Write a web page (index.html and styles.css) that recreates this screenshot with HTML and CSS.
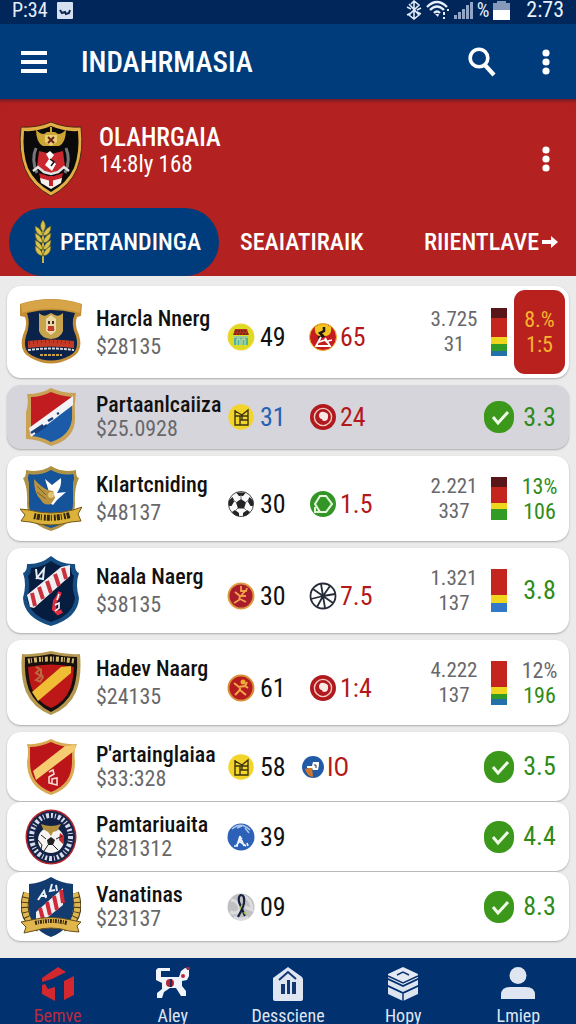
FILE: index.html
```html
<!DOCTYPE html>
<html lang="id">

<head>
    <meta charset="utf-8" />
    <meta name="viewport" content="width=device-width, initial-scale=1">
    <title>Indahrmasia</title>
    <link rel="stylesheet" href="styles.css">
</head>

<body>
    <!-- shared icons -->
    <svg class="sprite" aria-hidden="true">
        <symbol id="dots" viewBox="0 0 8 26">
            <circle cx="4" cy="4" r="3.6" /><circle cx="4" cy="13" r="3.6" /><circle cx="4" cy="22" r="3.6" />
        </symbol>
        <symbol id="check" viewBox="0 0 30 32">
            <rect width="30" height="32" rx="14.5" fill="#3b981a" />
            <path d="M9 16l5 6L24 11" fill="none" stroke="#effbe9" stroke-width="3" />
        </symbol>
        <symbol id="gate" viewBox="0 0 28 28">
            <circle cx="14" cy="14" r="12.7" fill="#f3d42b" />
            <path d="M8 7v15h13V7l-6 5-7-4M8 13h13M13 13v9M13 17h8M15 12v5" fill="none" stroke="#3d3410" stroke-width="1.4" />
        </symbol>
        <symbol id="target" viewBox="0 0 28 28">
            <circle cx="14" cy="14" r="13" fill="#b01a1e" />
            <circle cx="14" cy="14" r="8.6" fill="none" stroke="#f3c9c5" stroke-width="1.4" />
            <path d="M10 12q1-4 5-3 5 1 4 5 0 4-4 4-2 0-2-2-3 0-3-4z" fill="#fbe9e6" />
        </symbol>
    </svg>

    <div class="statusbar">
        <span>P:34</span>
        <svg width="16" height="18" viewBox="0 0 16 18"><rect y="1" width="16" height="17" rx="1" fill="#d5e0f1" /><path d="M3 9l2 3 3-1 1 2 3-1 1-3" fill="none" stroke="#0d2552" stroke-width="2" /></svg>
        <div class="statusbar-right">
            <svg width="16" height="20" viewBox="0 0 16 20" fill="none" stroke="#dfe9f8" stroke-width="1.6"><path d="M8 1v18M3 4l10 11-5 4-5-4L13 5 8 1 5 4M1 7l4 2M1 15l4-2M15 8l-4 2M15 14l-4-2" /></svg>
            <svg width="24" height="20" viewBox="0 0 24 20" fill="none" stroke="#e6effb" stroke-width="2.4"><path d="M1 7Q11-3 21 7M4 10q7-7 14 0M8 13q3-3 6 0" /><path d="M9 14h4l-1 3z" fill="#e6effb" stroke="none" /><path d="M18 12v3M18 17v2M22 9v2" stroke-width="2" /></svg>
            <svg width="19" height="18" viewBox="0 0 19 18" fill="#91a5c8"><path d="M0 14h3v4H0zM4 11h3v7H4zM8 8h3v10H8zM12 4h3v14h-3zM16 1h3v17h-3z" /></svg>
            <span>%</span>
            <svg width="17" height="19" viewBox="0 0 17 19"><path d="M4 0h9v2h4v8H0V2h4z" fill="#8799bb" /><path d="M0 9h17v10H0z" fill="#fff" /></svg>
            <span class="clock">2:73</span>
        </div>
    </div>

    <header class="appbar">
        <button class="icon-btn" aria-label="Menu">
            <svg width="26" height="22" viewBox="0 0 26 22" fill="#fff"><path d="M0 0h26v4H0zM0 9h26v4H0zM0 18h26v4H0z" /></svg>
        </button>
        <h1>INDAHRMASIA</h1>
        <button class="icon-btn" aria-label="Cari">
            <svg width="28" height="30" viewBox="0 0 28 30" fill="none" stroke="#fff" stroke-width="3.6"><circle cx="11" cy="11" r="8.8" /><path d="M16 17l10 11" stroke-width="4.2" /></svg>
        </button>
        <button class="icon-btn more" aria-label="Opsi"><svg width="8" height="26"><use href="#dots" /></svg></button>
    </header>

    <section class="hero">
        <div class="league">
            <svg width="64" height="76" viewBox="0 0 64 76">
                <path d="M32 1Q18 7 2 6q-3 24 4 42 7 17 26 27 19-10 26-27 7-18 4-42Q46 7 32 1z" fill="#e2ad45" stroke="#4c2712" />
                <path d="M32 5Q18 11 5 10q-2 22 4 37 7 15 23 24 16-9 23-24 6-15 4-37Q46 11 32 5z" fill="#0b0a0b" />
                <path d="M17 8q0 14 7 17h16q7-3 7-17-3 5-8 5l-3-2h-8l-3 2q-5 0-8-5z" fill="#cda534" />
                <path d="M26 14h12v7l-6 4-6-4z" fill="#e9cf77" /><path d="M29 16l6 6M35 16l-6 6" stroke="#6d2418" stroke-width="2" /><path d="M31 6h2v6h-2z" fill="#cda534" />
                <path d="M20 30l12 3 12-3 2 16-14 7-14-7z" fill="#c9282e" />
                <path d="M17 27q-5 12 1 25M47 27q5 12-1 25" stroke="#77767a" stroke-width="3" fill="none" />
                <path d="M31 30l4 4-3 4 5 5-4 7-7-6 4-6-3-5z" fill="#fff" /><path d="M31 38l4 3-3 4" stroke="#111" stroke-width="1.5" fill="none" />
                <path d="M14 50l5-4 6 5 7 2 7-2 6-5 5 4" fill="none" stroke="#e4e2df" stroke-width="2.5" />
                <path d="M20 52l12 4 12-4-2 9-10 6-10-6z" fill="#c8232a" /><path d="M21 57l11 3 11-3-1 5-10 6-10-6z" fill="#f4f0ec" /><path d="M30 55h4v10h-4z" fill="#c8232a" />
            </svg>
            <div class="league-info">
                <h2>OLAHRGAIA</h2>
                <p>14:8ly 168</p>
            </div>
            <button class="icon-btn" aria-label="Opsi liga"><svg width="8" height="26"><use href="#dots" /></svg></button>
        </div>
        <nav class="tabs">
            <a href="#" class="tab active">
                <svg width="20" height="44" viewBox="0 0 20 44"><path d="M10 1v42" stroke="#d0b43c" stroke-width="2" /><g fill="#d9c24c" stroke="#5b5a25" stroke-width=".7"><path d="M10 0q5 6 0 12-5-6 0-12z" /><path id="leaf" d="M10 16Q2 15 2 6q7 3 8 10zM10 16q8-1 8-10-7 3-8 10z" /><use href="#leaf" y="7" /><use href="#leaf" y="14" /><use href="#leaf" y="20" /></g></svg>
                PERTANDINGA
            </a>
            <a href="#" class="tab">SEAIATIRAIK</a>
            <a href="#" class="tab last">RIIENTLAVE<svg width="16" height="14" viewBox="0 0 16 14"><path d="M0 5h9V1l7 6-7 6V9H0z" fill="#fff" /></svg></a>
        </nav>
    </section>

    <main>
        <ul class="list">
            <li class="card first">
                <svg class="crest" width="64" height="66" viewBox="0 0 64 66">
                    <path d="M1 5Q32-5 63 5l-1 12-4 1q-3 8 2 18 5 17-8 23-20 11-40 0Q-1 53 4 36q5-10 2-18l-5-1z" fill="#c28d35" />
                    <path d="M8 14q24-6 48 0-5 11 1 23 4 15-7 20-18 9-36 0Q3 52 7 37q5-12 1-23z" fill="#0b2349" />
                    <path d="M2 5q30-9 60 0l-1 9Q32 5 3 14z" fill="#d7a548" />
                    <path d="M20 14q4 4 8 2l4-2 4 2q4 2 8-2v18q-2 7-12 8-10-1-12-8z" fill="#c8a44c" />
                    <path d="M27 20l5-4 5 4v12l-5 4-5-4z" fill="#e9d9a7" /><path d="M29 22h2v3h-2zM33 22h2v3h-2zM28 31l4-3 4 3" fill="#422d22" /><path d="M29 27h6v5h-6z" fill="#c53b2e" />
                    <path d="M9 42q23-3 46 0v7q-23-3-46 0z" fill="#c33a25" /><path d="M10 44q22-3 44 0" stroke="#8c2a20" stroke-width="3" stroke-dasharray="1 3" fill="none" />
                    <path d="M9 51q23-3 46 0" stroke="#d6d9dd" stroke-width="2" stroke-dasharray="3 1" fill="none" /><path d="M21 56h22" stroke="#c9a03d" stroke-width="2" stroke-dasharray="3 1" />
                </svg>
                <div class="team"><h3>Harcla Nnerg</h3><p>$28135</p></div>
                <div class="stat">
                    <svg viewBox="0 0 28 28"><circle cx="14" cy="14" r="12.7" fill="#d9dc22" stroke="#efd534" stroke-width="1.5" /><path d="M8 6h12l2 6H6z" fill="#b9311c" /><path d="M8 8h12M7 11h14" stroke="#3b2b17" stroke-dasharray="2 1" /><path d="M7 13h14v9H7z" fill="#4fb1a0" /><path d="M10 22v-6h3v6M15 22v-6h3v6M7 14h14" stroke="#e5e89b" fill="none" /></svg>
                    <span>49</span>
                </div>
                <div class="stat red">
                    <svg viewBox="0 0 28 28"><circle cx="14" cy="14" r="13.5" fill="#c51c20" stroke="#eeb62b" /><path d="M6 4q8-6 16 0 1 8-5 9h-6q-6-1-5-9z" fill="#f1c51f" /><path d="M15 4v4l-4 2 3 3-5 2" stroke="#25130d" stroke-width="2.5" fill="none" /><path d="M12 14l-5 9h14l-5-8M10 19l6-2 3 3M19 18l4-1" stroke="#fff" stroke-width="1.8" fill="none" /></svg>
                    <span>65</span>
                </div>
                <div class="odds">3.725<br>31</div>
                <div class="meter"><i class="dark s10"></i><i class="crimson s19"></i><i class="yellow s7"></i><i class="green s7"></i><i class="blue s5"></i></div>
                <div class="score hot"><b>8.%</b><b>1:5</b></div>
            </li>

            <li class="card compact selected">
                <svg class="crest" width="54" height="60" viewBox="0 0 54 60">
                    <path d="M27 1Q17 7 3 7q2 9-1 18v27q12 0 25 7 25-7 24-29-1-12 1-24Q37 6 27 1z" fill="#c9a256" />
                    <path d="M27 5Q17 10 7 10v34L48 12v-2Q36 9 27 5z" fill="#c11d20" /><path d="M48 15v17q-2 17-21 23-9-5-19-6z" fill="#1c5ba8" />
                    <path d="M5 41L49 9v9L7 50z" fill="#f3f2f6" /><path d="M7 46l12-8M11 46l12-8M24 34l5-3M33 27l2-1" stroke="#173f7c" stroke-width="2.5" fill="none" />
                </svg>
                <div class="team"><h3>Partaanlcaiiza</h3><p>$25.0928</p></div>
                <div class="stat blue-text"><svg><use href="#gate" /></svg><span>31</span></div>
                <div class="stat red"><svg><use href="#target" /></svg><span>24</span></div>
                <svg class="check" width="30" height="32"><use href="#check" /></svg>
                <div class="score"><b>3.3</b></div>
            </li>

            <li class="card">
                <svg class="crest" width="62" height="66" viewBox="0 0 62 66">
                    <path d="M31 0Q20 7 6 4q0 8-3 8 5 10 4 25 0 21 24 28 24-7 24-28-1-15 4-25-3 0-3-8-14 3-25-4z" fill="#ad9246" />
                    <path d="M31 4Q20 10 9 8 7 11 9 17v20q0 19 22 25 22-6 22-25V17q2-6 0-9-11 2-22-4z" fill="#15539a" />
                    <path d="M25 13l7 6 9-7q1 8-4 15l9-1-9 8-4 5-7-4 3-9z" fill="#fff" /><path d="M14 13q8 9 14 11l5 1 2 7-4 6q-7 2-10-4-7-6-7-21z" fill="#b89442" /><path d="M17 20l9 9M17 26l9 7" stroke="#7b6128" /><circle cx="31" cy="29" r="3" fill="#e3c574" />
                    <path d="M0 43l9 1q22 6 44 0l9-3-4 7 3 7-10 1q-20 6-41 0l-9-1 4-6z" fill="#dbb33b" stroke="#775818" /><path d="M14 50q17 4 36-1" stroke="#352a10" stroke-width="6" stroke-dasharray="2 1 3 1 1 2" fill="none" />
                </svg>
                <div class="team"><h3>Kılartcniding</h3><p>$48137</p></div>
                <div class="stat">
                    <svg viewBox="0 0 28 28"><circle cx="14" cy="14" r="12.5" fill="#fafafa" stroke="#494a4e" /><path d="M14 9l5 3.500-2 6h-6l-2-6zM9 2.500h10L16 6h-4zM1.500 11l4-4 2 4-3 5H2zM26.500 11l-4-4-2 4 3 5h2.500zM5 22l3-2 4 3v3.500q-5-1-7-4.500zM23 22l-3-2-4 3v3.500q5-1 7-4.500z" fill="#242427" /><path d="M14 9V5M19 12l3-2M17 18l3 3M11 18l-3 3M9 12l-3-2" stroke="#777" /></svg>
                    <span>30</span>
                </div>
                <div class="stat red">
                    <svg viewBox="0 0 28 28"><circle cx="14" cy="14" r="13" fill="#339525" /><path d="M11 6h6l6 8-6 8h-6l-5-8z" fill="none" stroke="#e8f8df" stroke-width="2" /><path d="M6 17v5h5" fill="none" stroke="#dff4d4" stroke-width="2" /></svg>
                    <span>1.5</span>
                </div>
                <div class="odds">2.221<br>337</div>
                <div class="meter"><i class="dark s10"></i><i class="crimson s16"></i><i class="yellow s6"></i><i class="green s11"></i></div>
                <div class="score"><b>13%</b><b>106</b></div>
            </li>

            <li class="card">
                <svg class="crest" width="58" height="70" viewBox="0 0 58 70">
                    <path d="M29 0Q18 9 5 8q0 8-4 9 4 11 0 25 1 20 28 28 27-8 28-28-4-14 0-25-4-1-4-9Q40 9 29 0z" fill="#164e83" />
                    <path d="M29 5Q19 12 9 12q0 6-3 8 3 10-1 22 2 17 24 24 22-7 24-24-4-12-1-22-3-2-3-8-10 0-20-7z" fill="#061d40" />
                    <path d="M5 39L39 11l9-2v11L12 52l-4-1z" fill="#f2eff1" /><path d="M10 37l3 13M17 31l4 12M25 25l4 12M33 18l4 12M41 12l3 11" stroke="#c7323c" stroke-width="4" />
                    <path d="M14 13l1 9 6 1 1-10-8 10" stroke="#e5edf6" stroke-width="2" fill="none" /><path d="M38 36l-2 5-3 4-1 8 4 4 4-2" stroke="#e22e40" stroke-width="4" fill="none" /><path d="M33 49l4-2v5l-4 3M37 38l-2 6" stroke="#fff" stroke-width="1.5" fill="none" />
                </svg>
                <div class="team"><h3>Naala Naerg</h3><p>$38135</p></div>
                <div class="stat">
                    <svg viewBox="0 0 28 28"><circle cx="14" cy="14" r="12.5" fill="#a91c2b" stroke="#dc9b3e" stroke-width="2" /><path d="M14 4v5h5l1-3M8 10l5 4h6M13 14l-1 4-5 3M13 17l6 3M18 9l-4 5" stroke="#f0a24b" stroke-width="1.8" fill="none" /></svg>
                    <span>30</span>
                </div>
                <div class="stat red">
                    <svg viewBox="0 0 28 28"><circle cx="14" cy="14" r="12.5" fill="#fff" stroke="#252b37" stroke-width="1.8" /><path d="M14 14l-2-12M14 14l7-10M14 14l12-2M14 14l10 7M14 14l2 12M14 14L8 25M14 14L2 17M14 14L4 7" stroke="#252b37" stroke-width="1.8" /></svg>
                    <span>7.5</span>
                </div>
                <div class="odds">1.321<br>137</div>
                <div class="meter"><i class="crimson s26"></i><i class="yellow s8"></i><i class="azure s9"></i></div>
                <div class="score"><b>3.8</b></div>
            </li>

            <li class="card">
                <svg class="crest" width="60" height="66" viewBox="0 0 60 66">
                    <path d="M30 1Q15 5 1 4q-2 23 4 38 7 16 25 23 18-7 25-23 6-15 4-38Q45 5 30 1z" fill="#b59850" />
                    <path d="M30 4Q16 7 4 7 3 27 8 40q7 15 22 22 15-7 22-22 5-13 4-33Q44 7 30 4z" fill="#17100d" />
                    <path d="M7 17q23-5 46 0-1 15-4 22-5 13-19 19-14-6-19-19-3-7-4-22z" fill="#bd1718" /><path d="M40 17l10-1v7L17 51l-6-9z" fill="#f0bd35" />
                    <path d="M7 11q23-4 46 0" stroke="#d1b769" stroke-width="5" stroke-dasharray="2 1 1 2 3 2" fill="none" /><path d="M15 17l4 2-4 4 5 3-5 4 5 2M20 19v5l2 3-3 5" stroke="#bd693d" stroke-width="2" fill="none" />
                </svg>
                <div class="team"><h3>Hadev Naarg</h3><p>$24135</p></div>
                <div class="stat">
                    <svg viewBox="0 0 28 28"><circle cx="14" cy="14" r="12.5" fill="#b51c20" stroke="#d98e35" stroke-width="2" /><circle cx="16" cy="8" r="2.5" fill="#f0ad34" /><path d="M7 9l5 4 6-1 2-4M14 12l-2 5-4 4M13 16l6 5M18 12l3 2" stroke="#f1a846" stroke-width="2" fill="none" /></svg>
                    <span>61</span>
                </div>
                <div class="stat red"><svg><use href="#target" /></svg><span>1:4</span></div>
                <div class="odds">4.222<br>137</div>
                <div class="meter"><i class="crimson s26"></i><i class="yellow s7"></i><i class="green s5"></i><i class="blue s6"></i></div>
                <div class="score"><b class="muted">12%</b><b>196</b></div>
            </li>

            <li class="card compact">
                <svg class="crest" width="52" height="58" viewBox="0 0 52 58">
                    <path d="M26 1Q14 7 2 6q2 8 0 18 0 25 24 33 24-8 24-33-1-8 0-13l2-5Q37 7 26 1z" fill="#d9aa52" />
                    <path d="M26 4Q15 9 5 9v15q0 22 21 30 21-8 21-30V9Q36 9 26 4z" fill="#bc1519" /><path d="M40 8l11-1-2 6-38 29-3-9z" fill="#f5cd70" />
                    <path d="M24 34l4-2 1 4-5 3v6l8 2v-7l-5 1v4" stroke="#f3d9d6" stroke-width="1.6" fill="none" />
                </svg>
                <div class="team"><h3>P'artainglaiaa</h3><p>$33:328</p></div>
                <div class="stat"><svg><use href="#gate" /></svg><span>58</span></div>
                <div class="stat red small">
                    <svg viewBox="0 0 22 22"><circle cx="11" cy="11" r="11" fill="#215aa6" /><path d="M3 13l7-2 1 10q-6-1-8-8z" fill="#d0762b" /><path d="M5 10h5l1-4h6v3l-1 5h-5l-1-2H5z" fill="#fff" /><path d="M12 9h2v3" stroke="#333" fill="none" /></svg>
                    <span>IO</span>
                </div>
                <svg class="check" width="30" height="32"><use href="#check" /></svg>
                <div class="score"><b>3.5</b></div>
            </li>

            <li class="card compact">
                <svg class="crest" width="52" height="56" viewBox="0 0 52 56">
                    <ellipse cx="26" cy="28" rx="25.5" ry="27.5" fill="#b4242d" /><ellipse cx="26" cy="28" rx="24" ry="26" fill="#172449" />
                    <ellipse cx="26" cy="28" rx="19.5" ry="21.5" fill="none" stroke="#d6ddeb" stroke-width="5" stroke-dasharray="2 2 1 2 3 2" />
                    <ellipse cx="26" cy="28" rx="15.5" ry="18" fill="#122246" /><circle cx="26" cy="31" r="13" fill="#f7f5f4" /><path d="M35 24l4 3v9l-5-5z" fill="#c7282c" />
                    <path d="M26 28l4 3-2 5h-5l-1-5z" fill="#222" /><path d="M13 31l4 5-1 4M23 36l-4 6M28 36l5 5M31 30l6-3M21 30l-5-4" fill="none" stroke="#222" /><path d="M16 15q10 4 20 0l-4 7-4 1-2 4-3-4-5-3z" fill="#b3903d" />
                </svg>
                <div class="team"><h3>Pamtariuaita</h3><p>$281312</p></div>
                <div class="stat">
                    <svg viewBox="0 0 28 28"><circle cx="14" cy="14" r="13.5" fill="#2c61b7" /><path d="M5 6q9-8 18 1M10 5l5-2M18 5l4 5" stroke="#a9c5ea" stroke-width="1.5" fill="none" /><path d="M13 13l-3 10M13 13l4 10M12 18l7 5M7 23h4M15 15l-6 8M20 20l1 3" stroke="#edf4fd" stroke-width="1.7" fill="none" /></svg>
                    <span>39</span>
                </div>
                <svg class="check" width="30" height="32"><use href="#check" /></svg>
                <div class="score"><b>4.4</b></div>
            </li>

            <li class="card compact">
                <svg class="crest" width="60" height="62" viewBox="0 0 60 62">
                    <path d="M6 17Q-2 42 18 52M54 17q8 25-12 35" fill="none" stroke="#4d3c18" stroke-width="8" /><path d="M6 17Q-2 42 18 52M54 17q8 25-12 35" fill="none" stroke="#dfb54f" stroke-width="6" stroke-dasharray="4 1" />
                    <path d="M30 1Q20 7 8 8v25q1 20 22 28 21-8 22-28V8Q40 7 30 1z" fill="#123b70" />
                    <path d="M15 36L42 12v17L22 45l-7-2z" fill="#f2eef0" /><path d="M19 32l3 11M26 26l3 13M33 20l3 14M40 14l2 13" stroke="#cf2836" stroke-width="4" />
                    <path d="M17 24l6-9 2 7M19 20h7M31 8l-2 7 5-1M35 9l1 6" stroke="#e8eff7" stroke-width="2" fill="none" />
                    <path d="M0 46l10-2q20-5 40 0l10 2-4 4 2 6-10-1q-18-6-36 0l-9 2 2-6z" fill="#e0b64d" stroke="#68501d" /><path d="M14 47q16-4 32 0" stroke="#382a11" stroke-width="4" stroke-dasharray="2 1 1 1" fill="none" />
                </svg>
                <div class="team"><h3>Vanatinas</h3><p>$23137</p></div>
                <div class="stat">
                    <svg viewBox="0 0 28 28"><circle cx="14" cy="14" r="13.5" fill="#c0c0c3" /><path d="M4 7q8 1 9 9-3 6-10 3M17 3q8 4 8 14l-7-3M7 24q7 4 14 0" stroke="#dcdcdf" stroke-width="3" fill="none" /><path d="M18 23L12 9q-1-6 2-7 4 0 3 8-1 5-6 14" stroke="#15203e" stroke-width="2.2" fill="none" /><path d="M15 12l-2 4M17 19l2 3" stroke="#9fc13a" stroke-width="1.5" /></svg>
                    <span>09</span>
                </div>
                <svg class="check" width="30" height="32"><use href="#check" /></svg>
                <div class="score"><b>8.3</b></div>
            </li>
        </ul>
    </main>

    <nav class="bottom-nav">
        <a href="#" class="active">
            <svg width="34" height="34" viewBox="0 0 34 34" fill="#d3282f"><path d="M1 11L17 0l8 5-14 7-10 3zM1 18l3-1 3 5 7-2v14L1 27zM23 14l10-5v19l-10 5z" /></svg>
            <span>Бemve</span>
        </a>
        <a href="#">
            <svg width="36" height="32" viewBox="0 0 36 32"><path d="M3 1h12v3H6v6h18l2-6 4-3 4 1v7l-2 4-5 1v5l4 5v5h-5l-5-8h-6l-6 4-2 6H2v-5l5-4v-6l-6-3V3z" fill="#f1f4fa" /><circle cx="15" cy="16" r="4" fill="#b72435" /><path d="M16 12v8" stroke="#182c5f" stroke-width="2" /><circle cx="28" cy="9" r="2" fill="#c32435" /><path d="M31 0h4v3h-3z" fill="#9e2741" /></svg>
            <span>Aley</span>
        </a>
        <a href="#">
            <svg width="30" height="34" viewBox="0 0 30 34"><path d="M15 0l14 10 1 2v20q0 2-2 2H2q-2 0-2-2V11z" fill="#dfe6f2" /><path d="M6 13l9-8 8 7" stroke="#123771" stroke-width="2" fill="none" /><path d="M8 17h4v10H8zM14 13h3v14h-3zM19 15h4v12h-4z" fill="#123771" /></svg>
            <span>Dessciene</span>
        </a>
        <a href="#">
            <svg width="32" height="34" viewBox="0 0 32 34"><path d="M16 0l15 7v4l-15 7L1 11V7z" fill="#e4eaf4" /><path d="M10 8l6-3 6 3" fill="none" stroke="#0d3270" stroke-width="1.5" /><path d="M1 13l15 7 15-7v5l-15 7-15-7zM1 20l15 7 15-7v7l-15 7-15-7z" fill="#dde4f0" /><path d="M1 9l15 7 15-7M16 27v7" stroke="#0d3270" stroke-width="1.500" fill="none" /></svg>
            <span>Hopy</span>
        </a>
        <a href="#">
            <svg width="34" height="32" viewBox="0 0 34 32" fill="#dfe6f2"><circle cx="17" cy="8.5" r="8.5" /><path d="M0 32v-4q0-8 9-8h16q9 0 9 8v4z" /></svg>
            <span>Lmiep</span>
        </a>
    </nav>
</body>

</html>
```
FILE: styles.css
```css
* {
    box-sizing: border-box;
    margin: 0;
    padding: 0;
}

body {
    min-height: 100vh;
    display: flex;
    flex-direction: column;
    background-color: #ebebec;
    font-family: "Roboto Condensed", "Liberation Sans Narrow", Roboto, sans-serif;
    color: #111;
}

a {
    color: inherit;
    text-decoration: none;
}

svg {
    display: block;
    flex-shrink: 0;
}

.sprite {
    position: absolute;
    width: 0;
    height: 0;
}

/* top bars */
.statusbar {
    display: flex;
    align-items: center;
    gap: 9px;
    height: 24px;
    padding: 0 12px 4px;
    background-color: #00265a;
    color: #e6effb;
    font-size: 20px;
    line-height: 20px;
}

.statusbar-right {
    display: flex;
    align-items: center;
    gap: 4px;
    margin-left: auto;
}

.clock {
    padding-left: 12px;
    font-size: 22px;
}

.appbar {
    display: flex;
    align-items: center;
    height: 75px;
    padding: 0 26px 0 21px;
    background-color: #003b7b;
    color: #fff;
}

.appbar h1 {
    flex: 1;
    padding-left: 34px;
    font-size: 29px;
    font-weight: 500;
}

.icon-btn {
    border: 0;
    background: none;
    fill: #fff;
    cursor: pointer;
}

.appbar .more {
    margin-left: 46px;
}

.hero {
    background-color: #b32220;
    box-shadow: inset 0 5px 4px -4px #50182c;
    color: #fff;
}

.league {
    display: flex;
    align-items: center;
    height: 109px;
    padding: 10px 26px 0 19px;
}

.league-info {
    flex: 1;
    padding: 0 0 16px 16px;
}

.league h2 {
    font-size: 25px;
    line-height: 28px;
    font-weight: 500;
}

.league p {
    font-size: 23px;
    line-height: 26px;
}

.tabs {
    display: flex;
    align-items: center;
    padding: 0 18px 0 9px;
    font-size: 24px;
    font-weight: 500;
}

.tab {
    display: flex;
    align-items: center;
    gap: 3px;
}

.tab.active {
    height: 68px;
    gap: 7px;
    margin-right: 21px;
    padding: 0 18px 0 24px;
    border-radius: 34px;
    background-color: #003b7b;
}

.tab.last {
    margin-left: auto;
}

/* match list */
main {
    flex: 1;
    padding: 10px 7px;
}

.list {
    display: flex;
    flex-direction: column;
    gap: 7px;
    list-style: none;
}

.card {
    display: grid;
    grid-template-columns: 64px 132px 82px 1fr 60px 30px 51px;
    grid-template-rows: 1fr;
    align-items: center;
    min-height: 85px;
    padding: 0 4px 0 12px;
    border-radius: 14px;
    background-color: #fff;
    box-shadow: 0 1px 2px #aaa;
}

.card.first {
    min-height: 92px;
}

.card.compact {
    min-height: 69px;
}

.card.compact + .card.compact {
    margin-top: -6px;
}

.card.selected {
    min-height: 64px;
    background-color: #d6d5dc;
}

.crest {
    justify-self: center;
}

.team {
    padding-left: 13px;
    white-space: nowrap;
}

.team h3 {
    font-size: 22px;
    line-height: 28px;
    font-weight: 500;
}

.team p {
    font-size: 22px;
    line-height: 27px;
    color: #68686b;
}

.compact .team h3,
.compact .team p {
    line-height: 24px;
}

.stat {
    grid-column: 3;
    display: flex;
    align-items: center;
    gap: 5px;
    padding: 10px 0 0 12px;
    font-size: 26px;
    line-height: 28px;
    white-space: nowrap;
}

.compact .stat {
    padding-top: 0;
}

.stat svg {
    width: 28px;
    height: 28px;
}

.stat.red {
    grid-column: 4;
    gap: 3px;
    color: #b3191b;
}

.stat.small {
    padding-left: 5px;
}

.stat.small svg {
    width: 22px;
    height: 22px;
}

.stat.blue-text {
    color: #2462b4;
}

.odds {
    grid-column: 5;
    font-size: 21px;
    line-height: 25px;
    text-align: center;
    color: #68686b;
}

.meter {
    grid-column: 6;
    justify-self: center;
    width: 16px;
}

.meter i {
    display: block;
}

.dark { background-color: #581619; }
.crimson { background-color: #c5251f; }
.yellow { background-color: #efd51e; }
.green { background-color: #319b25; }
.blue { background-color: #2470a8; }
.azure { background-color: #3179c8; }

.s5 { height: 5px; }
.s6 { height: 6px; }
.s7 { height: 7px; }
.s8 { height: 8px; }
.s9 { height: 9px; }
.s10 { height: 10px; }
.s11 { height: 11px; }
.s16 { height: 16px; }
.s19 { height: 19px; }
.s26 { height: 26px; }

.check {
    grid-column: 6;
    justify-self: center;
}

.score {
    grid-column: 7;
    text-align: center;
    color: #2f8b18;
}

.score b {
    display: block;
    font-size: 22px;
    line-height: 25px;
    font-weight: 400;
}

.score b:only-child {
    font-size: 26px;
}

.score .muted {
    color: #68686b;
}

.score.hot {
    display: flex;
    flex-direction: column;
    justify-content: center;
    height: 84px;
    border-radius: 11px;
    background-color: #b9211f;
    color: #f6b52c;
}

/* bottom navigation */
.bottom-nav {
    display: grid;
    grid-template-columns: repeat(5, 1fr);
    height: 66px;
    overflow: hidden;
    background-color: #02316f;
    color: #dfe6f2;
    font-size: 18px;
    line-height: 20px;
}

.bottom-nav a {
    display: flex;
    flex-direction: column;
    align-items: center;
    justify-content: space-between;
    height: 68px;
    padding-top: 9px;
}

.bottom-nav .active {
    color: #b92c40;
}
```
